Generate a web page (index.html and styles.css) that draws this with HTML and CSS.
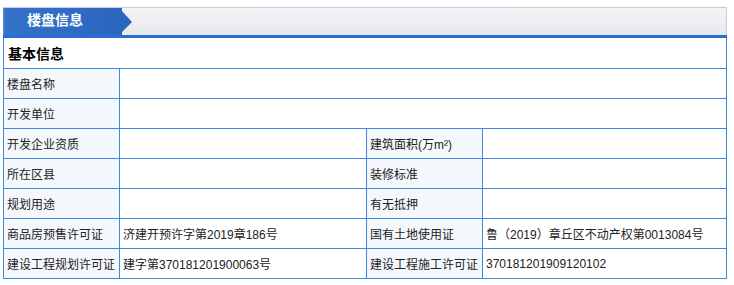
FILE: index.html
```html
<!DOCTYPE html>
<html lang="zh-CN">
<head>
<meta charset="utf-8">
<title>楼盘信息</title>
<link rel="stylesheet" href="styles.css">
</head>
<body>
<div class="page">
  <div class="head">
    <div class="tab">楼盘信息</div>
  </div>
  <div class="bar"></div>
  <div class="grid">
    <div class="title">基本信息</div>
    <div class="lbl">楼盘名称</div><div class="val span3"></div>
    <div class="lbl">开发单位</div><div class="val span3"></div>
    <div class="lbl">开发企业资质</div><div class="val"></div><div class="lbl">建筑面积(万m²)</div><div class="val"></div>
    <div class="lbl">所在区县</div><div class="val"></div><div class="lbl">装修标准</div><div class="val"></div>
    <div class="lbl">规划用途</div><div class="val"></div><div class="lbl">有无抵押</div><div class="val"></div>
    <div class="lbl">商品房预售许可证</div><div class="val">济建开预许字第2019章186号</div><div class="lbl">国有土地使用证</div><div class="val">鲁（2019）章丘区不动产权第0013084号</div>
    <div class="lbl">建设工程规划许可证</div><div class="val">建字第370181201900063号</div><div class="lbl">建设工程施工许可证</div><div class="val">370181201909120102</div>
  </div>
</div>
</body>
</html>
```
FILE: styles.css
```css
html, body {
  margin: 0;
  padding: 0;
  background: #ffffff;
}
body {
  font-family: "Liberation Sans", "Noto Sans CJK SC", sans-serif;
  font-size: 12px;
  color: #222;
}
.page {
  padding: 7px 0 0 3px;
  width: 724px;
}
.head {
  height: 27px;
  border-top: 1px solid #c9c9dd;
  border-right: 1px solid #c9c9dd;
  background: linear-gradient(#f4f4f6, #e7e7ef);
}
.tab {
  width: 129px;
  height: 27px;
  box-sizing: border-box;
  padding-left: 24px;
  line-height: 25px;
  font-size: 14px;
  font-weight: bold;
  color: #ffffff;
  background: linear-gradient(90deg, #5b8fd6 0, #3473c9 2px, #2a65c0 100%);
  clip-path: polygon(0 0, 119px 0, 119px 3px, 129px 14px, 119px 24px, 119px 27px, 0 27px);
}
.bar {
  height: 3px;
  background: #2a6fd0;
}
.grid {
  display: grid;
  grid-template-columns: 115px 246px 115px 243px;
  grid-template-rows: 30px;
  grid-auto-rows: 29px;
  gap: 1px;
  padding: 0 1px 1px 1px;
  background: #3c8ae0;
}
.grid > div {
  display: flex;
  align-items: center;
  padding-left: 3px;
  white-space: nowrap;
  overflow: hidden;
}
.title {
  grid-column: 1 / -1;
  background: #ffffff;
  font-size: 14px;
  font-weight: bold;
  color: #000;
}
.grid > .title {
  padding-left: 4px;
}
.lbl {
  background: #f4f8fc;
  color: #222;
}
.val {
  background: #ffffff;
  color: #222;
}
.span3 {
  grid-column: span 3;
}
```
